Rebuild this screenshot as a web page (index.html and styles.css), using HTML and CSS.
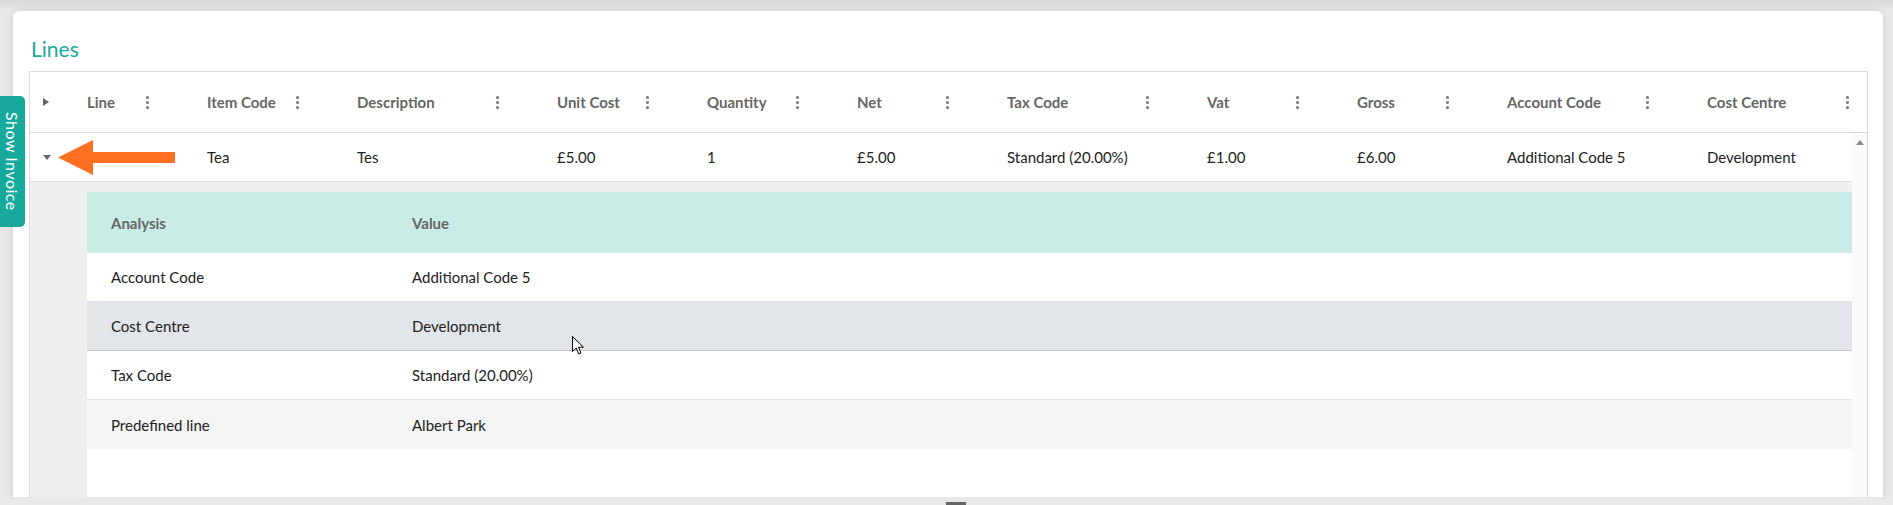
FILE: index.html
```html
<!DOCTYPE html>
<html lang="en">
<head>
<meta charset="UTF-8">
<meta name="viewport" content="width=device-width, initial-scale=1.0">
<title>Invoice - Lines</title>
<link rel="stylesheet" href="styles.css">
</head>
<body>
  <button class="invoice-tab">Show Invoice</button>

  <div class="page">
    <div class="card">
      <h2 class="section-title">Lines</h2>

      <div class="grid">
        <div class="grid-header">
          <div class="cell cell-expand"><span class="caret-right"></span></div>
          <div class="cell w120">Line<span class="kebab"></span></div>
          <div class="cell w150">Item Code<span class="kebab"></span></div>
          <div class="cell w200">Description<span class="kebab"></span></div>
          <div class="cell w150">Unit Cost<span class="kebab"></span></div>
          <div class="cell w150">Quantity<span class="kebab"></span></div>
          <div class="cell w150">Net<span class="kebab"></span></div>
          <div class="cell w200">Tax Code<span class="kebab"></span></div>
          <div class="cell w150">Vat<span class="kebab"></span></div>
          <div class="cell w150">Gross<span class="kebab"></span></div>
          <div class="cell w200">Account Code<span class="kebab"></span></div>
          <div class="cell w200">Cost Centre<span class="kebab"></span></div>
        </div>

        <div class="grid-body">
          <div class="grid-rows">
            <div class="grid-row">
              <div class="cell cell-expand"><span class="caret-down"></span></div>
              <div class="cell w120"></div>
              <div class="cell w150">Tea</div>
              <div class="cell w200">Tes</div>
              <div class="cell w150">£5.00</div>
              <div class="cell w150">1</div>
              <div class="cell w150">£5.00</div>
              <div class="cell w200">Standard (20.00%)</div>
              <div class="cell w150">£1.00</div>
              <div class="cell w150">£6.00</div>
              <div class="cell w200">Additional Code 5</div>
              <div class="cell w200">Development</div>
            </div>

            <!-- expanded line: analysis breakdown -->
            <div class="detail">
              <div class="analysis">
                <div class="analysis-row analysis-head"><span>Analysis</span><span>Value</span></div>
                <div class="analysis-row"><span>Account Code</span><span>Additional Code 5</span></div>
                <div class="analysis-row hover"><span>Cost Centre</span><span>Development</span></div>
                <div class="analysis-row"><span>Tax Code</span><span>Standard (20.00%)</span></div>
                <div class="analysis-row shaded"><span>Predefined line</span><span>Albert Park</span></div>
              </div>
            </div>
          </div>
          <div class="scrollbar"><span class="scroll-up"></span></div>
        </div>
      </div>
    </div>
    <div class="divider"><span class="grip"></span></div>
  </div>

  <svg class="pointer-arrow" width="117" height="35" viewBox="0 0 117 35">
    <polygon points="0,17.5 35,0 35,12 117,12 117,23 35,23 35,35" fill="#fd6f21"/>
  </svg>

  <svg class="cursor" width="13" height="20" viewBox="0 0 13 20">
    <polygon points="0.5,0.5 0.5,15.5 4.2,12 6.8,18 9,17 6.5,11.2 11.5,11.2" fill="#fff" stroke="#000" stroke-width="1"/>
  </svg>
</body>
</html>
```

FILE: styles.css
```css
* {
  box-sizing: border-box;
}
body {
  margin: 0;
  height: 505px;
  overflow: hidden;
  font-family: Lato, "Open Sans", sans-serif;
  font-size: 15px;
  color: #222;
  background: linear-gradient(#d9d9d9, #e9e9e9 11px);
}
.page {
  padding: 11px 10px 0 13px;
}
.card {
  height: 486px;
  display: flex;
  flex-direction: column;
  background: #fff;
  border-radius: 6px 6px 0 0;
  box-shadow: 0 0 8px rgba(0,0,0,0.12);
  padding: 26px 15px 0 16px;
  overflow: hidden;
}
.section-title {
  margin: 0 0 10px 2px;
  font-size: 21px;
  line-height: 24px;
  font-weight: 400;
  color: #17a99b;
}

/* lines grid */
.grid {
  flex: 1;
  min-height: 0;
  display: flex;
  flex-direction: column;
  border: 1px solid #dcdcdc;
  border-bottom: none;
  overflow: hidden;
}
.grid-header {
  flex: none;
  display: flex;
  height: 61px;
  border-bottom: 1px solid #dcdcdc;
  color: #666;
  font-weight: 700;
}
.cell {
  flex: none;
  display: flex;
  align-items: center;
  padding-left: 12px;
  white-space: nowrap;
}
.cell-expand {
  width: 45px;
  padding-left: 13px;
}
.w120 { width: 120px; }
.w150 { width: 150px; }
.w200 { width: 200px; }
.kebab {
  margin-left: auto;
  margin-right: 46px;
  width: 3px;
  height: 3px;
  border-radius: 50%;
  background: #777;
  box-shadow: 0 -5px 0 #777, 0 5px 0 #777;
}
.caret-right {
  border-left: 6px solid #666;
  border-top: 4px solid transparent;
  border-bottom: 4px solid transparent;
}
.caret-down {
  border-top: 5px solid #666;
  border-left: 4px solid transparent;
  border-right: 4px solid transparent;
}
.grid-body {
  flex: 1;
  min-height: 0;
  display: flex;
}
.grid-rows {
  flex: 1;
  min-width: 0;
  display: flex;
  flex-direction: column;
  overflow: hidden;
}
.grid-row {
  flex: none;
  display: flex;
  height: 49px;
  border-bottom: 1px solid #dcdcdc;
}
.scrollbar {
  flex: none;
  width: 15px;
  background: #fafafa;
  display: flex;
  justify-content: center;
}
.scroll-up {
  margin-top: 7px;
  width: 0;
  height: 0;
  border-bottom: 5px solid #8a8a8a;
  border-left: 4px solid transparent;
  border-right: 4px solid transparent;
}

/* analysis detail under an expanded line */
.detail {
  flex: 1;
  display: flex;
  flex-direction: column;
  background: #efefef;
  padding: 10px 0 0 57px;
}
.analysis {
  flex: 1;
  background: #fff;
}
.analysis-row {
  display: grid;
  grid-template-columns: 301px 1fr;
  align-items: center;
  height: 49px;
  border-bottom: 1px solid #e3e3e3;
}
.analysis-row span {
  padding-left: 24px;
}
.analysis-head {
  height: 61px;
  background: #c9ece7;
  color: #666;
  font-weight: 700;
  border-bottom: none;
}
.analysis-row.hover {
  background: #e2e5e9;
  border-bottom-color: #c4c8cd;
}
.analysis-row.shaded {
  background: #f4f4f4;
  border-bottom: none;
}

.divider {
  height: 8px;
  background: #e9e9e9;
  display: flex;
  justify-content: center;
}
.grip {
  margin: 5px 0 0 16px;
  width: 20px;
  height: 3px;
  background: #666;
}

.invoice-tab {
  position: absolute;
  left: 0;
  top: 96px;
  width: 25px;
  height: 131px;
  padding: 0;
  border: none;
  border-radius: 0 5px 5px 0;
  background: #17a99b;
  color: #fff;
  font-family: Lato, "Open Sans", sans-serif;
  font-size: 16px;
  letter-spacing: 0.5px;
  writing-mode: vertical-rl;
  cursor: pointer;
}
.pointer-arrow {
  position: absolute;
  left: 58px;
  top: 140px;
}
.cursor {
  position: absolute;
  left: 572px;
  top: 336px;
}
```
